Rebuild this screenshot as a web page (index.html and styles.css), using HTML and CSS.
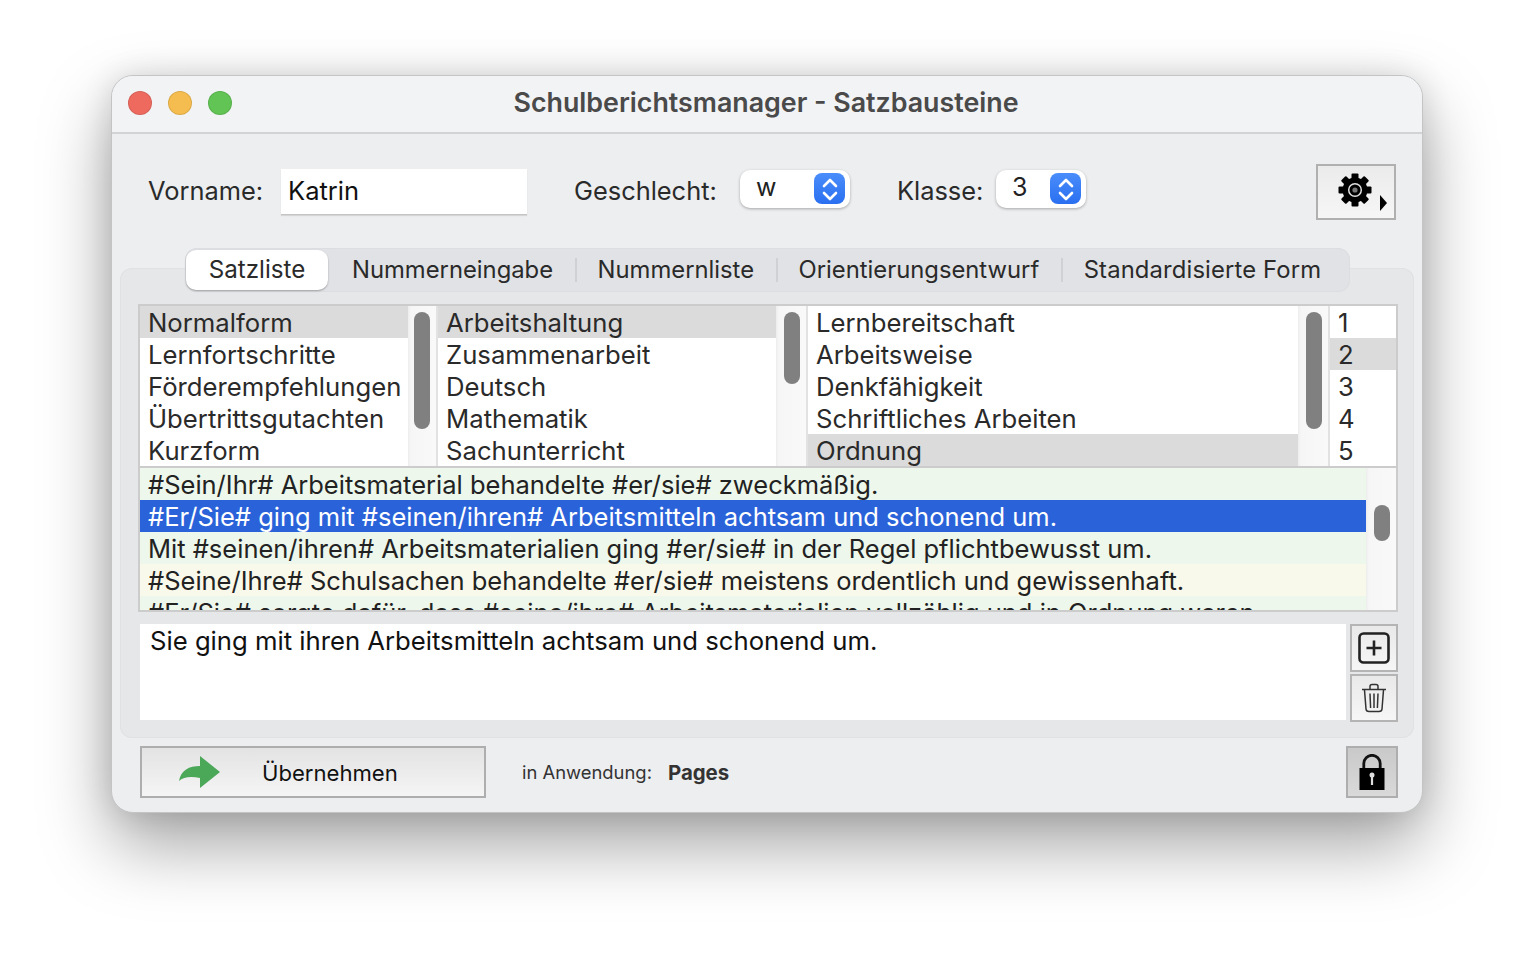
FILE: index.html
```html
<!DOCTYPE html>
<html lang="de">
<head>
<meta charset="utf-8">
<title>Schulberichtsmanager - Satzbausteine</title>
<link rel="stylesheet" href="styles.css">
</head>
<body>
<div class="window">
  <header class="titlebar">
    <div class="lights"><span class="light red"></span><span class="light yellow"></span><span class="light green"></span></div>
    <div class="title">Schulberichtsmanager - Satzbausteine</div>
  </header>
  <section class="toprow">
    <label class="lbl lbl-name">Vorname:</label>
    <div class="input">Katrin</div>
    <label class="lbl lbl-gender">Geschlecht:</label>
    <div class="select sel-gender"><span class="val">w</span>
      <span class="stepper"><svg viewBox="0 0 24 32" width="24" height="32"><path d="M6 13l6-6 6 6M6 20l6 6 6-6" fill="none" stroke="#fff" stroke-width="2.600" stroke-linecap="round" stroke-linejoin="round"/></svg></span></div>
    <label class="lbl lbl-class">Klasse:</label>
    <div class="select sel-class"><span class="val">3</span>
      <span class="stepper"><svg viewBox="0 0 24 32" width="24" height="32"><path d="M6 13l6-6 6 6M6 20l6 6 6-6" fill="none" stroke="#fff" stroke-width="2.600" stroke-linecap="round" stroke-linejoin="round"/></svg></span></div>
    <div class="gearbtn">
      <svg class="gear" viewBox="0 0 34 34" width="34" height="34">
        <circle cx="17" cy="17" r="12.500" fill="#000"/>
        <rect x="13.500" y="0.500" width="7" height="33" rx="1" fill="#000"/>
        <rect x="13.500" y="0.500" width="7" height="33" rx="1" fill="#000" transform="rotate(45 17 17)"/>
        <rect x="13.500" y="0.500" width="7" height="33" rx="1" fill="#000" transform="rotate(90 17 17)"/>
        <rect x="13.500" y="0.500" width="7" height="33" rx="1" fill="#000" transform="rotate(135 17 17)"/>
        <circle cx="17" cy="17" r="6.300" fill="#000" stroke="#e0e0e0" stroke-width="1.500"/>
        <circle cx="17" cy="17" r="2.600" fill="#777"/>
      </svg>
      <svg class="caret" viewBox="0 0 7 16" width="7" height="16"><path d="M0 0l7 8-7 8z" fill="#000"/></svg>
    </div>
  </section>
  <section class="panelwrap">
    <nav class="tabs">
      <span class="tab active">Satzliste</span>
      <span class="tab t2">Nummerneingabe</span><i class="sep"></i>
      <span class="tab t3">Nummernliste</span><i class="sep"></i>
      <span class="tab t4">Orientierungsentwurf</span><i class="sep"></i>
      <span class="tab t5">Standardisierte Form</span>
    </nav>
    <div class="panel">
      <div class="lists">
        <div class="columns">
          <ul class="col c1">
            <li class="on">Normalform</li><li>Lernfortschritte</li><li>Förderempfehlungen</li><li>Übertrittsgutachten</li><li>Kurzform</li>
          </ul>
          <div class="scroll s1"><b class="thumb th-long"></b></div>
          <ul class="col c2">
            <li class="on">Arbeitshaltung</li><li>Zusammenarbeit</li><li>Deutsch</li><li>Mathematik</li><li>Sachunterricht</li>
          </ul>
          <div class="scroll s2"><b class="thumb th-mid"></b></div>
          <ul class="col c3">
            <li>Lernbereitschaft</li><li>Arbeitsweise</li><li>Denkfähigkeit</li><li>Schriftliches Arbeiten</li><li class="on">Ordnung</li>
          </ul>
          <div class="scroll s3"><b class="thumb th-long"></b></div>
          <ul class="col c4">
            <li>1</li><li class="on">2</li><li>3</li><li>4</li><li>5</li>
          </ul>
        </div>
        <div class="sentences">
          <ul class="slist">
            <li class="g">#Sein/Ihr# Arbeitsmaterial behandelte #er/sie# zweckmäßig.</li>
            <li class="sel">#Er/Sie# ging mit #seinen/ihren# Arbeitsmitteln achtsam und schonend um.</li>
            <li class="g">Mit #seinen/ihren# Arbeitsmaterialien ging #er/sie# in der Regel pflichtbewusst um.</li>
            <li class="y">#Seine/Ihre# Schulsachen behandelte #er/sie# meistens ordentlich und gewissenhaft.</li>
            <li class="g">#Er/Sie# sorgte dafür, dass #seine/ihre# Arbeitsmaterialien vollzählig und in Ordnung waren.</li>
          </ul>
          <div class="scroll s4"><b class="thumb th-short"></b></div>
        </div>
      </div>
      <div class="editor">
        <div class="text">Sie ging mit ihren Arbeitsmitteln achtsam und schonend um.</div>
        <div class="tools">
          <div class="tool"><svg viewBox="0 0 32 32" width="32" height="32"><rect x="1.500" y="1.500" width="29" height="29" rx="4" fill="none" stroke="#222" stroke-width="2.600"/><path d="M16 8.500v15M8.500 16h15" stroke="#222" stroke-width="2.600" fill="none"/></svg></div>
          <div class="tool"><svg viewBox="0 0 26 30" width="26" height="30"><path d="M1 6.500h24M9 6V3.500Q9 1.500 11 1.500h4Q17 1.500 17 3.500V6M3.500 7l1.500 19q.2 2.500 3 2.500h10q2.800 0 3-2.500l1.500-19M9 10.500l.6 14.500M13 10.500v14.500M17 10.500l-.6 14.500" fill="none" stroke="#333" stroke-width="1.500"/></svg></div>
        </div>
      </div>
    </div>
  </section>
  <footer class="bottom">
    <div class="apply">
      <svg class="arrow" viewBox="0 0 42 32" width="42" height="32"><path fill="#4aa858" d="M0 25C2 14 10 10 21 10V0l20 16-20 16V22C12 20 4 21 0 25z"/></svg>
      <span>Übernehmen</span>
    </div>
    <span class="app-l">in Anwendung:</span>
    <span class="app-v">Pages</span>
    <div class="lock"><svg viewBox="0 0 26 36" width="26" height="36"><path d="M4.800 15V9.500a8.200 8.200 0 0 1 16.400 0V15" fill="none" stroke="#111" stroke-width="2.800"/><rect x="0.500" y="14" width="25" height="22" fill="#000"/><circle cx="13" cy="21" r="2.500" fill="#ddd"/><path d="M13 21v10" stroke="#ddd" stroke-width="2.200"/></svg></div>
  </footer>
</div>
</body>
</html>
```
FILE: styles.css
```css
* { box-sizing: border-box; }
html, body { margin: 0; padding: 0; }
body {
  width: 1534px; height: 960px; overflow: hidden; background: #fff;
  font-family: Inter, "Liberation Sans", sans-serif; color: #222;
  padding: 75px 0 0 111px;
}
ul { list-style: none; margin: 0; padding: 0; }
.window {
  width: 1312px; height: 738px; border-radius: 22px;
  background: #edeef0; border: 1px solid #c4c4c4;
  box-shadow: 0 32px 70px rgba(0,0,0,.36), 0 0 30px rgba(0,0,0,.12);
  overflow: hidden;
}
.titlebar {
  height: 58px; background: #f2f3f5; border-bottom: 2px solid #d2d3d5;
  display: flex; align-items: center; padding: 0 0 2px 16px; position: relative;
}
.lights { display: flex; gap: 16px; }
.light { width: 24px; height: 24px; border-radius: 50%; border: 1px solid rgba(0,0,0,.1); }
.red { background: #ee6a5f; } .yellow { background: #f5bd4f; } .green { background: #61c454; }
.title {
  position: absolute; left: 0; right: 2px; top: 11px; text-align: center;
  font-size: 26.800px; font-weight: 600; color: #4a4a4a; line-height: 31px;
}
.toprow { height: 114px; display: flex; align-items: flex-start; padding: 30px 0 0 36px; }
.lbl { font-size: 25.400px; line-height: 54px; color: #2a2a2a; }
.lbl-name { width: 133px; }
.input {
  width: 246px; height: 46px; margin-top: 5px; background: #fff; padding: 0 7px;
  font-size: 25.500px; line-height: 44px; color: #111; border-bottom: 1px solid #c4c4c4;
  box-shadow: 0 1px 1px rgba(0,0,0,.1);
}
.lbl-gender { margin-left: 47px; width: 166px; }
.select {
  height: 38px; margin-top: 6px; background: #fff; border-radius: 10px; position: relative;
  box-shadow: 0 1px 3px rgba(0,0,0,.3); font-size: 25px; line-height: 34px; color: #222;
}
.sel-gender { width: 110px; padding-left: 16px; }
.sel-class { width: 90px; padding-left: 16px; }
.lbl-class { margin-left: 47px; width: 99px; }
.stepper {
  position: absolute; right: 5px; top: 3px; width: 31px; height: 31px; border-radius: 8px;
  background: linear-gradient(#4a8dfb, #2a6ff0); display: flex; align-items: center; justify-content: center;
}
.gearbtn {
  width: 80px; height: 56px; margin-left: 230px; position: relative;
  border: 2px solid #b0b0b0; background: linear-gradient(#ebebeb, #f6f6f7);
}
.gear { position: absolute; left: 20px; top: 7px; }
.caret { position: absolute; left: 62px; top: 29px; }
.panelwrap { padding: 0 8px; position: relative; height: 490px; }
.tabs {
  position: absolute; left: 73px; top: 0; width: 1165px; height: 44px; z-index: 1;
  display: flex; align-items: center; background: #e1e2e5; border-radius: 12px;
  box-shadow: inset 0 0 0 1px #dcdde0; font-size: 23.800px; color: #2a2a2a;
}
.tab { line-height: 40px; white-space: nowrap; }
.tab.active {
  width: 142px; height: 40px; margin-left: 1px; text-align: center; background: #fff; border-radius: 10px;
  box-shadow: 0 1px 2px rgba(0,0,0,.3); font-size: 24.200px;
}
.t2 { margin-left: 24px; }
.t5 { letter-spacing: .14px; }
.sep { width: 2px; height: 24px; background: #d0d1d4; margin: 0 21px 0 21.500px; }
.panel {
  position: absolute; left: 8px; right: 8px; top: 20px; height: 470px;
  background: #e6e7e9; border-radius: 12px; box-shadow: inset 0 0 0 1px #e0e1e3;
  padding: 36px 16px 0 18px;
}
.lists { width: 1260px; height: 308px; border: 2px solid #ccc; background: #ddd; }
.columns { display: flex; height: 160px; }
.col { background: #fff; font-size: 25.700px; color: #2a2a2a; overflow: hidden; }
.col li { height: 32px; line-height: 33px; padding-left: 8px; white-space: nowrap; }
.col li.on { background: #dbdbdb; }
.c1 { width: 268px; }
.c2 { width: 338px; }
.c3 { width: 490px; }
.c4 { width: 66px; }
.scroll { background: linear-gradient(90deg, #ededed 0, #f6f6f6 3px, #f9f9f9 100%); border-right: 2px solid #e2e2e2; padding-top: 6px; display: flex; justify-content: center; }
.s1 { width: 30px; } .s2 { width: 32px; padding-left: 2px; } .s3 { width: 32px; padding-left: 2px; }
.thumb { display: block; width: 16px; border-radius: 8px; background: #808080; }
.th-long { height: 117px; } .th-mid { height: 72px; } .th-short { height: 36px; margin-top: 37px; }
.sentences { display: flex; height: 144px; border-top: 2px solid #ccc; }
.slist { width: 1226px; height: 142px; overflow: hidden; font-size: 25.500px; color: #222; background: #fff; }
.slist li { height: 32px; line-height: 34px; padding-left: 8px; white-space: nowrap; }
.g { background: #edf7ec; } .y { background: #f8f9ea; }
.sel { background: #2a62d9; color: #fff; }
.s4 { width: 30px; height: 142px; padding-top: 0; padding-left: 2px; border-right: 0; }
.editor { display: flex; margin-top: 12px; }
.text {
  width: 1206px; height: 96px; margin-left: 2px; background: #fff; padding: 0 10px;
  font-size: 25.680px; line-height: 34px; color: #111;
}
.tools { margin-left: 4px; display: flex; flex-direction: column; gap: 2px; }
.tool {
  width: 48px; height: 48px; border: 2px solid #b4b4b4; background: linear-gradient(#e9e9ea, #f6f6f7);
  display: flex; align-items: center; justify-content: center;
}
.bottom { display: flex; align-items: center; padding: 8px 0 0 28px; height: 60px; }
.apply {
  width: 346px; height: 52px; border: 2px solid #aeaeae; background: linear-gradient(#e3e3e4, #f5f5f6);
  display: flex; align-items: center; font-size: 22.100px; color: #111;
}
.arrow { margin-left: 37px; }
.apply span { margin-left: 41px; padding-top: 1px; }
.app-l { margin-left: 36px; font-size: 18.400px; color: #333; }
.app-v { margin-left: 16px; font-size: 20.400px; font-weight: 700; color: #333; }
.lock {
  margin-left: auto; margin-right: 24px; width: 52px; height: 52px; border: 2px solid #aeaeae;
  background: linear-gradient(#c9c9c9, #d9d9d9); display: flex; align-items: center; justify-content: center;
}
```
